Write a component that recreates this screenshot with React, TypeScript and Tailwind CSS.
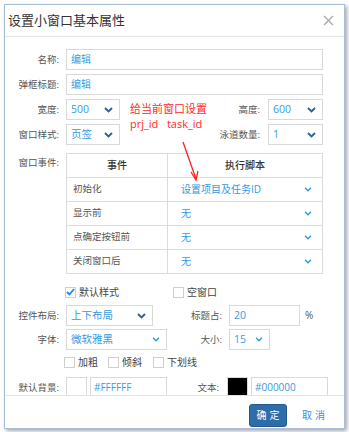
import React from 'react';

const Chevron = ({ light }: { light?: boolean }) => (
  <svg width={light ? 8 : 9} height={light ? 5 : 6} viewBox="0 0 9 6" fill="none">
    <path d="M1 1l3.5 3.5L8 1" stroke={light ? '#2f9ae4' : '#2a5f9e'} strokeWidth="1.8" />
  </svg>
);

const Label = ({ children, className = 'w-[54px]' }: { children: React.ReactNode; className?: string }) => (
  <div className={`${className} shrink-0 text-right text-[9.5px] text-[#555] leading-none`}>{children}</div>
);

const Select = ({ value, className, light }: { value: string; className: string; light?: boolean }) => (
  <div className={`${className} h-[21px] shrink-0 border border-[#d9d9d9] bg-white flex items-center justify-between pl-[4px] pr-[6px]`}>
    <span className="text-[10.5px] text-[#3a9ae0] leading-none">{value}</span>
    <Chevron light={light} />
  </div>
);

const Check = ({ label, checked }: { label: string; checked?: boolean }) => (
  <div className="flex items-center h-[10px]">
    <div className="w-[11px] h-[11px] border border-[#cfcfcf] bg-white flex items-center justify-center">
      {checked && (
        <svg width="9" height="8" viewBox="0 0 9 8" fill="none">
          <path d="M1 4l2.5 2.5L8 1" stroke="#1e88e5" strokeWidth="1.8" />
        </svg>
      )}
    </div>
    <span className="ml-[3px] text-[10px] text-[#444] leading-none">{label}</span>
  </div>
);

const events = [
  { name: '初始化', script: '设置项目及任务ID' },
  { name: '显示前', script: '无' },
  { name: '点确定按钮前', script: '无' },
  { name: '关闭窗口后', script: '无' },
];

export default function App() {
  return (
    <div className="w-[349px] h-[432px] bg-white relative font-['Open_Sans','Noto_Sans_CJK_SC',sans-serif] pt-[4px] pl-[4px]">
      <div className="w-[341px] h-[425px] border border-[#a9bcd9] bg-white shadow-[2px_2px_4px_rgba(0,0,0,0.35)] flex flex-col">
        {/* title */}
        <div className="h-[32px] shrink-0 border-b border-[#e6e6e6] flex items-center justify-between pl-[3px] pr-[10px]">
          <span className="text-[13px] text-[#333] leading-none">设置小窗口基本属性</span>
          <svg width="11" height="11" viewBox="0 0 11 11">
            <path d="M1 1l9 9M10 1l-9 9" stroke="#aaa" strokeWidth="1.3" />
          </svg>
        </div>

        {/* body */}
        <div className="h-[358px] shrink-0 overflow-hidden pt-[12px] pr-[21px]">
          <div className="flex items-center h-[21px]">
            <Label>名称:</Label>
            <div className="ml-[7px] flex-1 h-[21px] border border-[#d9d9d9] flex items-center pl-[4px] text-[10px] text-[#3a9ae0]">编辑</div>
          </div>
          <div className="mt-[4px] flex items-center h-[21px]">
            <Label>弹框标题:</Label>
            <div className="ml-[7px] flex-1 h-[21px] border border-[#d9d9d9] flex items-center pl-[4px] text-[10px] text-[#3a9ae0]">编辑</div>
          </div>

          <div className="mt-[4px] flex">
            <div className="flex flex-col gap-[4px]">
              <div className="flex items-center">
                <Label>宽度:</Label>
                <Select value="500" className="ml-[7px] w-[54px]" />
              </div>
              <div className="flex items-center">
                <Label>窗口样式:</Label>
                <Select value="页签" className="ml-[7px] w-[54px]" />
              </div>
            </div>
            <div className="flex-1 pl-[10px] pt-[2px] text-[11px] leading-[15px] text-[#ff2a2a]">
              <div>给当前窗口设置</div>
              <div className="whitespace-pre">prj_id   task_id</div>
            </div>
            <div className="flex flex-col gap-[4px]">
              <div className="flex items-center">
                <Label className="w-[46px]">高度:</Label>
                <Select value="600" className="ml-[8px] w-[55px]" />
              </div>
              <div className="flex items-center">
                <Label className="w-[46px]">泳道数量:</Label>
                <Select value="1" className="ml-[8px] w-[55px]" />
              </div>
            </div>
          </div>

          <div className="mt-[8px] flex items-start">
            <Label className="w-[54px] pt-[5px]">窗口事件:</Label>
            <div className="ml-[7px] flex-1 border-t border-l border-r border-[#dcdcdc]">
              <div className="flex h-[24px] border-b border-[#dcdcdc] text-[10px] text-[#333] font-medium">
                <div className="w-[101px] border-r border-[#dcdcdc] flex items-center justify-center">事件</div>
                <div className="flex-1 flex items-center justify-center">执行脚本</div>
              </div>
              {events.map((e) => (
                <div key={e.name} className="flex h-[24px] border-b border-[#dcdcdc]">
                  <div className="w-[101px] border-r border-[#dcdcdc] flex items-center pl-[6px] text-[9.5px] text-[#555]">{e.name}</div>
                  <div className="flex-1 flex items-center justify-between pl-[13px] pr-[10px] text-[10px] text-[#2f9ae4]">
                    <span>{e.script}</span>
                    <Chevron light />
                  </div>
                </div>
              ))}
            </div>
          </div>

          <div className="mt-[13px] flex pl-[60px]">
            <div className="w-[108px]">
              <Check label="默认样式" checked />
            </div>
            <Check label="空窗口" />
          </div>

          <div className="mt-[8px] flex items-center h-[21px]">
            <Label>控件布局:</Label>
            <div className="ml-[7px] w-[101px] shrink-0">
              <Select value="上下布局" className="w-[87px]" />
            </div>
            <Label className="w-[55px]">标题占:</Label>
            <div className="ml-[7px] w-[71px] h-[21px] border border-[#d9d9d9] flex items-center pl-[4px] text-[10.5px] text-[#3a9ae0]">20</div>
            <span className="ml-[5px] text-[10px] text-[#555]">%</span>
          </div>

          <div className="mt-[3px] flex items-center h-[21px]">
            <Label>字体:</Label>
            <Select value="微软雅黑" className="ml-[7px] w-[101px]" light />
            <Label className="w-[55px]">大小:</Label>
            <Select value="15" className="ml-[7px] w-[41px]" light />
          </div>

          <div className="mt-[7px] flex pl-[59px]">
            <div className="w-[44px]">
              <Check label="加粗" />
            </div>
            <div className="w-[45px]">
              <Check label="倾斜" />
            </div>
            <Check label="下划线" />
          </div>

          <div className="mt-[10px] grid grid-cols-[61px_101px_60px_101px] items-center h-[21px]">
            <div className="pr-[7px] text-right text-[9.5px] text-[#555] leading-none">默认背景:</div>
            <div className="flex items-center gap-[3px]">
              <div className="w-[21px] h-[21px] border border-[#d9d9d9] bg-white" />
              <div className="w-[77px] h-[21px] border border-[#d9d9d9] flex items-center pl-[3px] text-[10px] text-[#3a9ae0]">#FFFFFF</div>
            </div>
            <div className="pr-[8px] text-right text-[9.5px] text-[#555] leading-none">文本:</div>
            <div className="flex items-center gap-[3px]">
              <div className="w-[21px] h-[21px] border border-[#d9d9d9] bg-black" />
              <div className="w-[77px] h-[21px] border border-[#d9d9d9] flex items-center pl-[3px] text-[10px] text-[#3a9ae0]">#000000</div>
            </div>
          </div>
        </div>

        {/* footer */}
        <div className="flex-1 border-t border-[#e3e3e3] flex justify-end items-start pt-[8px] pr-[16px]">
          <button className="w-[38px] h-[23px] rounded-[3px] bg-[#2f6da8] border border-[#24598c] text-white text-[10px] tracking-[3px] pl-[3px]">确定</button>
          <span className="ml-[15px] h-[23px] flex items-center text-[10px] text-[#3a8ee0] tracking-[3px]">取消</span>
        </div>
      </div>

      {/* annotation arrow */}
      <svg className="absolute left-0 top-0 pointer-events-none" width="349" height="432">
        <path d="M183 142L196 179" stroke="#ff2020" strokeWidth="1.3" />
        <path d="M191 172L196 180L198 171" stroke="#ff2020" strokeWidth="1.3" fill="none" />
      </svg>
    </div>
  );
}
